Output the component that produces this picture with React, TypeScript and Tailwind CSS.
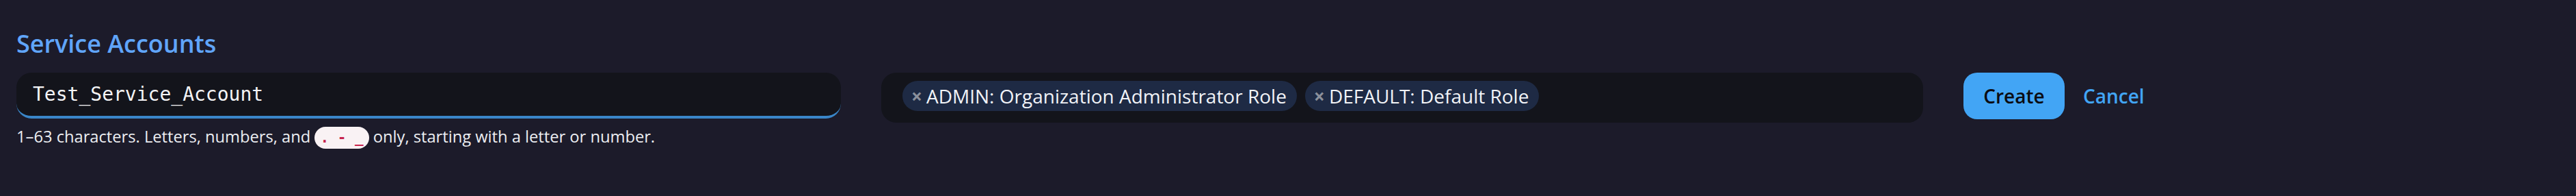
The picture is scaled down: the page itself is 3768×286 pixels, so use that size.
import React from "react";

function Chip({ label }: { label: string }) {
  return (
    <span className="flex h-[44px] items-center gap-[6px] rounded-full bg-[#1e2a44] pl-[13px] pr-[15px] text-[28px] leading-none text-[#f1f3f7]">
      <span className="font-bold text-[#8b909b]">×</span>
      <span>{label}</span>
    </span>
  );
}

export default function App() {
  return (
    <div
      className="min-h-screen bg-[#1c1b2a] pl-[24px] pt-[46px]"
      style={{ fontFamily: '"Open Sans", "Noto Sans", sans-serif' }}
    >
      <h2 className="text-[36px] font-semibold leading-[36px] text-[#60a5fa]">Service Accounts</h2>

      <div className="mt-[24px] flex items-start gap-[59px]">
        <div className="w-[1206px] shrink-0">
          <div className="flex h-[67px] items-center rounded-[22px] border-b-[4px] border-[#3a86c8] bg-[#13141b] pl-[24px]">
            <span
              className="text-[28px] leading-none text-[#f4f4f6]"
              style={{ fontFamily: '"DejaVu Sans Mono", monospace' }}
            >
              Test_Service_Account
            </span>
          </div>
          <p className="mt-[8px] text-[23.7px] leading-[36px] text-[#eceef2]">
            1–63 characters. Letters, numbers, and{" "}
            <code
              className="rounded-full bg-[#f9f2f4] px-[8px] py-[4px] text-[21px] font-bold text-[#c7254e]"
              style={{ fontFamily: '"DejaVu Sans Mono", monospace' }}
            >
              . - _
            </code>{" "}
            only, starting with a letter or number.
          </p>
        </div>

        <div className="flex h-[73px] w-[1524px] shrink-0 flex-wrap items-start gap-[12px] rounded-[22px] bg-[#13141b] px-[31px] pt-[12px]">
          <Chip label="ADMIN: Organization Administrator Role" />
          <Chip label="DEFAULT: Default Role" />
        </div>

        <div className="flex shrink-0 items-center gap-[27px]">
          <button className="h-[68px] w-[148px] rounded-[20px] bg-[#42a5f5] text-[28px] font-semibold text-[#0b0c12]">
            Create
          </button>
          <button className="text-[28px] font-semibold text-[#42a5f5]">Cancel</button>
        </div>
      </div>
    </div>
  );
}
